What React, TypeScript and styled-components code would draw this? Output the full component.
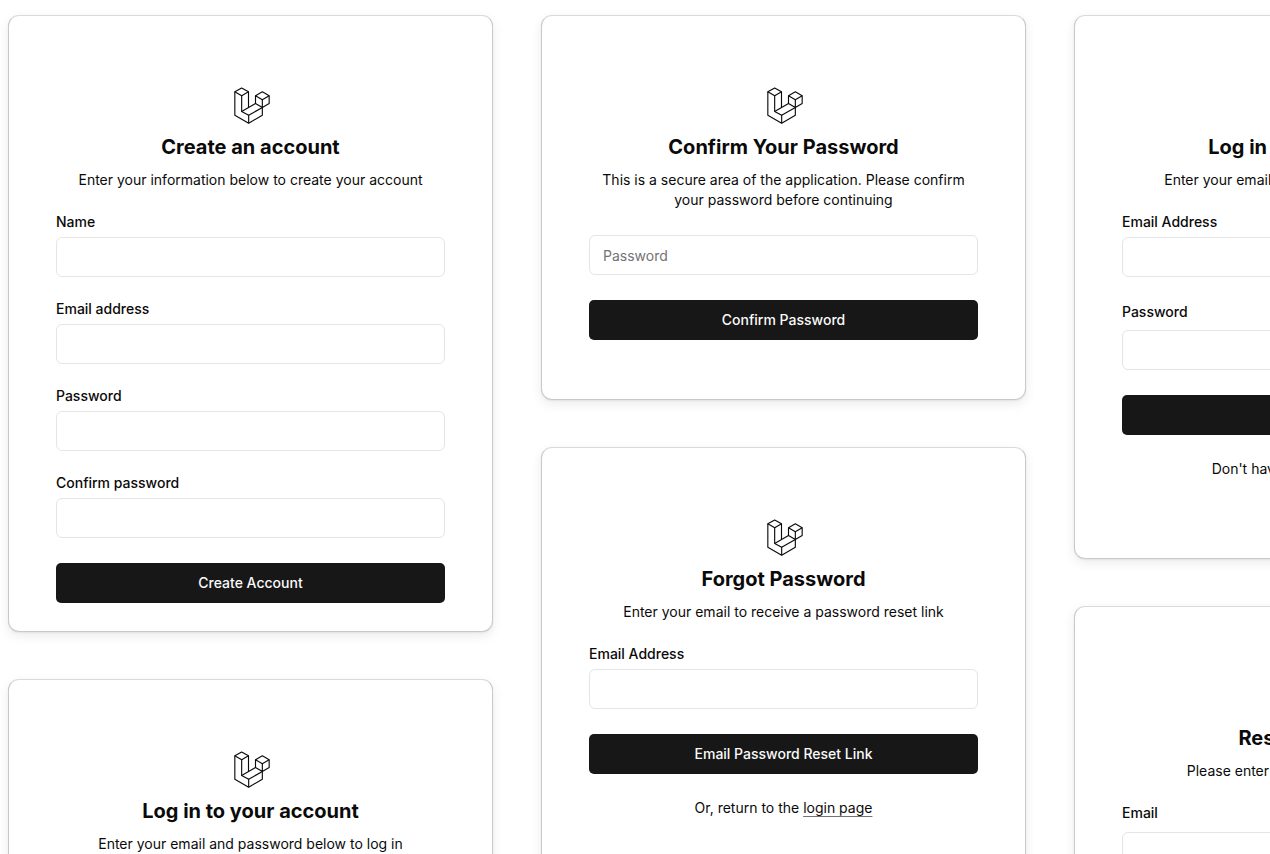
import React, { useId } from "react";
import styled, { createGlobalStyle } from "styled-components";

const GlobalStyle = createGlobalStyle`
  *, *::before, *::after { box-sizing: border-box; }
  body {
    margin: 0;
    background: #fff;
    color: #0a0a0a;
    font-family: Inter, "Liberation Sans", sans-serif;
    font-size: 14px;
    line-height: 20px;
    -webkit-font-smoothing: antialiased;
  }
`;

const Gallery = styled.main`
  display: grid;
  grid-auto-flow: column;
  grid-auto-columns: minmax(485px, 1fr);
  align-items: start;
  column-gap: 48px;
  height: 100vh;
  padding: 15px 8px;
  overflow: hidden;
`;

const Column = styled.div`
  display: flex;
  flex-direction: column;
  gap: 47px;
`;

const Card = styled.section<{ $bottom?: number }>`
  padding: 69px 47px ${(p) => p.$bottom ?? 59}px;
  border: 1px solid #c9c9c9;
  border-top-color: #dadada;
  border-radius: 11px;
  background: #fff;
  box-shadow: 0 4px 12px rgba(0, 0, 0, 0.08), 0 1px 2px rgba(0, 0, 0, 0.06);
`;

const Header = styled.header`
  display: flex;
  flex-direction: column;
  align-items: center;
  gap: 8px;
  margin-bottom: 25px;
  text-align: center;
`;

const Title = styled.h2`
  margin: 0;
  font-size: 20px;
  font-weight: 700;
  line-height: 29px;
`;

const Description = styled.p`
  margin: 0;
  padding: 0 8px;
`;

const Form = styled.form`
  display: flex;
  flex-direction: column;
  gap: 25px;
`;

const FieldBox = styled.div<{ $gap: number }>`
  display: flex;
  flex-direction: column;
  gap: ${(p) => p.$gap}px;
`;

const LabelRow = styled.div`
  display: flex;
  align-items: center;
  justify-content: space-between;
`;

const Label = styled.label`
  font-weight: 500;
  line-height: 14px;
`;

const Input = styled.input`
  width: 100%;
  height: 40px;
  padding: 8px 13px;
  border: 1px solid #e5e5e5;
  border-radius: 6px;
  background: #fff;
  color: inherit;
  font: inherit;

  &::placeholder { color: #737373; opacity: 1; }
`;

const Button = styled.button`
  width: 100%;
  height: 40px;
  border: 0;
  border-radius: 5px;
  background: #171717;
  color: #fafafa;
  font: inherit;
  font-weight: 500;
`;

const Footer = styled.p`
  margin: 24px 0 0;
  text-align: center;
`;

const Link = styled.a`
  color: inherit;
  text-decoration: underline #737373;
  text-decoration-thickness: 1px;
  text-underline-offset: 3px;
`;

const LogoSvg = styled.svg`
  display: block;
  width: 40px;
  height: 40px;
`;

function Logo() {
  return (
    <LogoSvg viewBox="33 30 120 120" fill="none" stroke="#0a0a0a" strokeWidth="3.4" strokeLinejoin="round" aria-hidden="true">
      <path d="M65 39 85.500 50.500 65 62 44.500 50.500Z" />
      <path d="M44.500 50.500V121L86 144.500 127 121V97.500" />
      <path d="M65 62V109.500L86 121V144.500M85.500 50.500V97.500" />
      <path d="M65 109.500 106.500 85.500M86 121 127 97.500" />
      <path d="M127 50.500 147.500 62 127 74 106.500 62Z" />
      <path d="M106.500 62V85.500L127 97.500 147.500 85.500V62M127 74V97.500" />
    </LogoSvg>
  );
}

type FieldProps = {
  label?: string;
  type?: string;
  placeholder?: string;
  gap?: number;
  aside?: React.ReactNode;
};

function Field({ label, type = "text", placeholder, gap = 8, aside }: FieldProps) {
  const id = useId();
  return (
    <FieldBox $gap={gap}>
      {label && (
        <LabelRow>
          <Label htmlFor={id}>{label}</Label>
          {aside}
        </LabelRow>
      )}
      <Input id={id} type={type} placeholder={placeholder} aria-label={label ? undefined : placeholder} />
    </FieldBox>
  );
}

type AuthCardProps = {
  title: string;
  description: React.ReactNode;
  bottom?: number;
  footer?: React.ReactNode;
  children: React.ReactNode;
};

function AuthCard({ title, description, bottom, footer, children }: AuthCardProps) {
  return (
    <Card $bottom={bottom}>
      <Header>
        <Logo />
        <Title>{title}</Title>
        <Description>{description}</Description>
      </Header>
      <Form onSubmit={(e) => e.preventDefault()}>{children}</Form>
      {footer && <Footer>{footer}</Footer>}
    </Card>
  );
}

function LoginCard() {
  return (
    <AuthCard
      title="Log in to your account"
      description="Enter your email and password below to log in"
      bottom={79}
      footer={<>Don't have an account? <Link href="#">Sign up</Link></>}
    >
      <Field label="Email Address" type="email" />
      <Field label="Password" type="password" aside={<Link href="#">Forgot password?</Link>} />
      <Button type="submit">Log in</Button>
    </AuthCard>
  );
}

export default function App() {
  return (
    <>
      <GlobalStyle />
      <Gallery>
        <Column>
          <AuthCard
            title="Create an account"
            description="Enter your information below to create your account"
            bottom={28}
          >
            <Field label="Name" />
            <Field label="Email address" type="email" />
            <Field label="Password" type="password" />
            <Field label="Confirm password" type="password" />
            <Button type="submit">Create Account</Button>
          </AuthCard>
          <LoginCard />
        </Column>
        <Column>
          <AuthCard
            title="Confirm Your Password"
            description="This is a secure area of the application. Please confirm your password before continuing"
          >
            <Field type="password" placeholder="Password" />
            <Button type="submit">Confirm Password</Button>
          </AuthCard>
          <AuthCard
            title="Forgot Password"
            description="Enter your email to receive a password reset link"
            footer={<>Or, return to the <Link href="#">login page</Link></>}
          >
            <Field label="Email Address" type="email" />
            <Button type="submit">Email Password Reset Link</Button>
          </AuthCard>
        </Column>
        <Column>
          <LoginCard />
          <AuthCard title="Reset password" description="Please enter your new password below">
            <Field label="Email" type="email" gap={12} />
            <Field label="Password" type="password" gap={12} />
            <Field label="Confirm password" type="password" gap={12} />
            <Button type="submit">Reset Password</Button>
          </AuthCard>
        </Column>
      </Gallery>
    </>
  );
}
